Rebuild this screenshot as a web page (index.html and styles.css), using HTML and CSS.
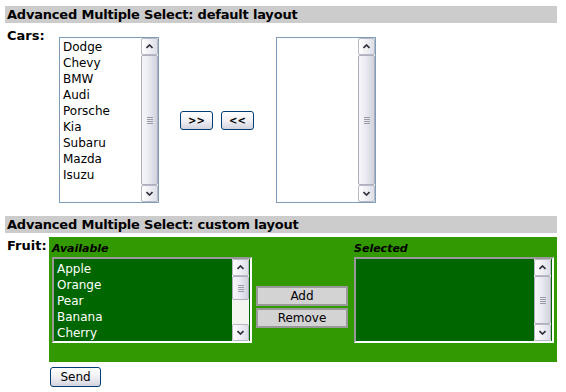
FILE: index.html
```html
<!DOCTYPE html>
<html lang="en">
  <head>
    <meta charset="UTF-8" />
    <title>Advanced Multiple Select</title>
    <link rel="stylesheet" href="styles.css">
  </head>
  <body>
    <form class="demo">
      <!-- Default layout -->
      <h2 class="section-title">Advanced Multiple Select: default layout</h2>
      <div class="field">
        <label class="field-label">Cars:</label>
        <div class="ams ams-default">
          <div class="listbox">
            <ul class="options">
              <li>Dodge</li>
              <li>Chevy</li>
              <li>BMW</li>
              <li>Audi</li>
              <li>Porsche</li>
              <li>Kia</li>
              <li>Subaru</li>
              <li>Mazda</li>
              <li>Isuzu</li>
            </ul>
            <div class="scrollbar">
              <div class="sb-btn"><svg width="7" height="5" viewBox="0 0 7 5"><path d="M0.5 4L3.5 1L6.5 4" fill="none" stroke="#2b2b3a" stroke-width="1.6"/></svg></div>
              <div class="sb-thumb full"><span class="grip"></span></div>
              <div class="sb-btn"><svg width="7" height="5" viewBox="0 0 7 5"><path d="M0.5 1L3.5 4L6.5 1" fill="none" stroke="#2b2b3a" stroke-width="1.6"/></svg></div>
            </div>
          </div>
          <div class="move-buttons">
            <button type="button" class="xp-btn move-btn">&gt;&gt;</button>
            <button type="button" class="xp-btn move-btn">&lt;&lt;</button>
          </div>
          <div class="listbox">
            <ul class="options"></ul>
            <div class="scrollbar">
              <div class="sb-btn"><svg width="7" height="5" viewBox="0 0 7 5"><path d="M0.5 4L3.5 1L6.5 4" fill="none" stroke="#2b2b3a" stroke-width="1.6"/></svg></div>
              <div class="sb-thumb full"><span class="grip"></span></div>
              <div class="sb-btn"><svg width="7" height="5" viewBox="0 0 7 5"><path d="M0.5 1L3.5 4L6.5 1" fill="none" stroke="#2b2b3a" stroke-width="1.6"/></svg></div>
            </div>
          </div>
        </div>
      </div>

      <!-- Custom layout -->
      <h2 class="section-title">Advanced Multiple Select: custom layout</h2>
      <div class="field">
        <label class="field-label">Fruit:</label>
        <div class="ams ams-custom">
          <div class="ams-col">
            <div class="col-label">Available</div>
            <div class="listbox green">
              <ul class="options">
                <li>Apple</li>
                <li>Orange</li>
                <li>Pear</li>
                <li>Banana</li>
                <li>Cherry</li>
              </ul>
              <div class="scrollbar">
                <div class="sb-btn"><svg width="7" height="5" viewBox="0 0 7 5"><path d="M0.5 4L3.5 1L6.5 4" fill="none" stroke="#2b2b3a" stroke-width="1.6"/></svg></div>
                <div class="sb-thumb small"><span class="grip"></span></div>
                <div class="sb-track"></div>
                <div class="sb-btn"><svg width="7" height="5" viewBox="0 0 7 5"><path d="M0.5 1L3.5 4L6.5 1" fill="none" stroke="#2b2b3a" stroke-width="1.6"/></svg></div>
              </div>
            </div>
          </div>
          <div class="custom-buttons">
            <button type="button" class="flat-btn">Add</button>
            <button type="button" class="flat-btn">Remove</button>
          </div>
          <div class="ams-col">
            <div class="col-label">Selected</div>
            <div class="listbox green">
              <ul class="options"></ul>
              <div class="scrollbar">
                <div class="sb-btn"><svg width="7" height="5" viewBox="0 0 7 5"><path d="M0.5 4L3.5 1L6.5 4" fill="none" stroke="#2b2b3a" stroke-width="1.6"/></svg></div>
                <div class="sb-thumb full"><span class="grip"></span></div>
                <div class="sb-btn"><svg width="7" height="5" viewBox="0 0 7 5"><path d="M0.5 1L3.5 4L6.5 1" fill="none" stroke="#2b2b3a" stroke-width="1.6"/></svg></div>
              </div>
            </div>
          </div>
        </div>
      </div>

      <button type="submit" class="xp-btn send-btn">Send</button>
    </form>
  </body>
</html>
```

FILE: styles.css
```css
/* Base */
* {
  margin: 0;
  padding: 0;
  box-sizing: border-box;
}

body {
  background: #fff;
  font-family: "DejaVu Sans", Verdana, sans-serif;
  font-size: 12px;
  color: #000;
}

.demo {
  padding: 6px 9px 0 5px;
}

/* Section headers */
.section-title {
  background: #cccccc;
  height: 17px;
  line-height: 17px;
  padding-left: 2px;
  font-size: 13px;
  font-weight: bold;
  letter-spacing: -0.2px;
  width: 552px;
}

.field {
  display: flex;
  margin: 4px 0 13px;
}

.field-label {
  width: 44px;
  padding-left: 2px;
  font-size: 13px;
  font-weight: bold;
  line-height: 17px;
  flex-shrink: 0;
}

/* Listbox + fake scrollbar */
.listbox {
  display: flex;
  background: #fff;
}

.options {
  list-style: none;
  flex: 1;
  padding: 1px 3px;
  line-height: 16px;
  white-space: nowrap;
  overflow: hidden;
}

.scrollbar {
  width: 17px;
  display: flex;
  flex-direction: column;
  background: #f4f4f0;
}

.sb-btn {
  height: 17px;
  flex-shrink: 0;
  border: 1px solid #b9b9c6;
  border-radius: 2px;
  background: linear-gradient(to right, #ffffff, #dedee8);
  display: flex;
  align-items: center;
  justify-content: center;
}

.sb-thumb {
  border: 1px solid #aeaebf;
  border-radius: 2px;
  background: linear-gradient(to right, #f6f6fa, #ececf3 40%, #d2d2de);
  display: flex;
  align-items: center;
  justify-content: center;
}

.sb-thumb.full {
  flex: 1;
}

.sb-thumb.small {
  height: 24px;
  flex-shrink: 0;
}

.sb-track {
  flex: 1;
}

.grip {
  width: 6px;
  height: 7px;
  background: repeating-linear-gradient(to bottom, #9a9aa8 0 1px, transparent 1px 2px);
}

/* Default layout */
.ams-default {
  display: flex;
  align-items: center;
  padding: 10px 0 0 10px;
}

.ams-default .listbox {
  width: 100px;
  height: 166px;
  border: 1px solid #7f9db9;
}

.move-buttons {
  display: flex;
  gap: 8px;
  margin: 0 22px 0 21px;
}

.xp-btn {
  font-family: "DejaVu Sans", Verdana, sans-serif;
  border: 1px solid #003c74;
  border-radius: 3px;
  background: linear-gradient(to bottom, #ffffff, #f0f0f4 50%, #d4d4e0);
  color: #000;
}

.move-btn {
  width: 33px;
  height: 19px;
  font-size: 10px;
  font-weight: bold;
  line-height: 17px;
}

/* Custom layout */
.ams-custom {
  display: flex;
  width: 508px;
  height: 125px;
  background: #339900;
  padding: 3px 3px 0;
}

.col-label {
  font-size: 11px;
  font-weight: bold;
  font-style: italic;
  line-height: 17px;
  height: 17px;
}

.listbox.green {
  width: 200px;
  height: 86px;
  background: #006600;
  color: #fff;
  border: 2px solid;
  border-color: #999 #fff #fff #999;
}

.listbox.green .options {
  padding-top: 2px;
}

.listbox.green .scrollbar {
  margin-right: 1px;
}

.custom-buttons {
  display: flex;
  flex-direction: column;
  gap: 2px;
  width: 92px;
  margin: 46px 6px 0 4px;
}

.flat-btn {
  height: 20px;
  font-family: "DejaVu Sans", Verdana, sans-serif;
  font-size: 12px;
  background: #d3d3d3;
  border: 2px solid #999;
  color: #000;
}

.send-btn {
  display: block;
  width: 51px;
  height: 20px;
  margin: -8px 0 0 45px;
  font-size: 12px;
}
```
